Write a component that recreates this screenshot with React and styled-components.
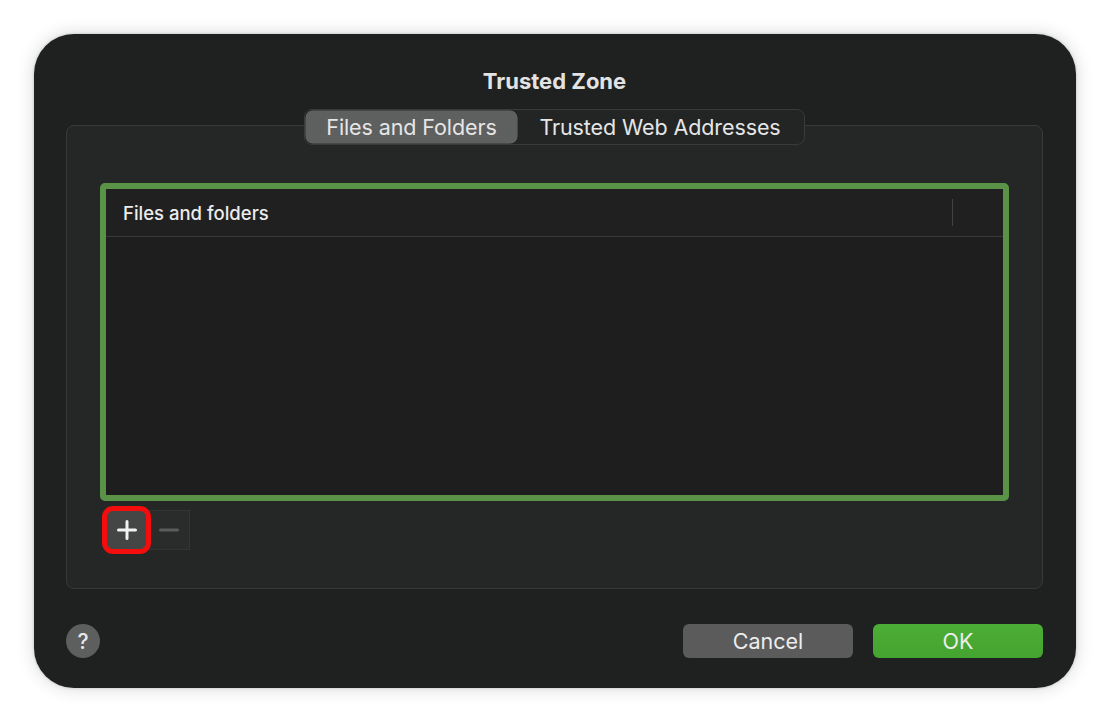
import React from "react";
import styled, { createGlobalStyle } from "styled-components";

const Global = createGlobalStyle`
  html, body { margin: 0; padding: 0; background: #ffffff; }
  body { font-family: "Inter", "Liberation Sans", sans-serif; -webkit-font-smoothing: antialiased; }
  * { box-sizing: border-box; }
`;

const Page = styled.div`
  width: 1110px;
  height: 722px;
  padding: 34px;
  background: #ffffff;
`;

const Window = styled.div`
  width: 1042px;
  height: 654px;
  border-radius: 40px;
  background: #1e2120;
  box-shadow: 0 0 18px rgba(0, 0, 0, 0.16), 0 0 3px rgba(0, 0, 0, 0.2);
  display: flex;
  flex-direction: column;
  padding: 0 33px 30px 32px;
`;

const Title = styled.div`
  margin-top: 33px;
  height: 28px;
  line-height: 28px;
  text-align: center;
  font-size: 22px;
  font-weight: 700;
  color: #e3e3e3;
`;

const Section = styled.div`
  margin-top: 14px;
  display: flex;
  flex-direction: column;
  align-items: center;
`;

const Segmented = styled.div`
  position: relative;
  z-index: 1;
  width: 501px;
  height: 36px;
  margin-bottom: -20px;
  padding: 1px;
  display: flex;
  border-radius: 8px;
  border: 1px solid #393b3b;
  background: #232525;
`;

const Segment = styled.div`
  flex: ${(p) => (p.$w ? `0 0 ${p.$w}px` : "1")};
  display: flex;
  align-items: center;
  justify-content: center;
  border-radius: 7px;
  font-size: 21.5px;
  color: #e6e6e6;
  background: ${(p) => (p.$active ? "#5e5f5f" : "transparent")};
  box-shadow: ${(p) => (p.$active ? "0 0 0 0.5px #6a6b6b" : "none")};
  letter-spacing: -0.1px;
`;

const GroupBox = styled.div`
  width: 977px;
  height: 464px;
  border: 1px solid #383a3a;
  border-radius: 8px;
  background: #242726;
  padding: 57px 33px 0 33px;
  display: flex;
  flex-direction: column;
`;

const Table = styled.div`
  height: 318px;
  border: 6px solid #5a9347;
  border-radius: 5px;
  background: #1e1e1e;
  display: flex;
  flex-direction: column;
`;

const Header = styled.div`
  height: 48px;
  flex: 0 0 48px;
  background: #202020;
  border-bottom: 1px solid #3a3a3a;
  display: flex;
  align-items: center;
  padding-left: 17px;
  padding-right: 50px;
`;

const HeaderLabel = styled.div`
  flex: 1;
  font-size: 18.5px;
  font-weight: 500;
  color: #ececec;
`;

const HeaderDivider = styled.div`
  width: 1px;
  height: 27px;
  background: #424242;
`;

const TableBody = styled.div`
  flex: 1;
`;

const ButtonRow = styled.div`
  margin-top: 9px;
  margin-left: 6px;
  display: flex;
`;

const SmallButton = styled.div`
  position: relative;
  z-index: ${(p) => (p.$enabled ? 2 : 1)};
  width: ${(p) => p.$w}px;
  height: 40px;
  display: flex;
  align-items: center;
  justify-content: center;
  background: ${(p) => (p.$enabled ? "#444646" : "#2a2c2c")};
  border: 1px solid ${(p) => (p.$enabled ? "#4a4c4c" : "#333535")};
`;

const Highlight = styled.div`
  position: absolute;
  top: -5px;
  bottom: -5px;
  left: -5px;
  right: -5px;
  border: 5px solid #f30d0d;
  border-radius: 11px;
  pointer-events: none;
`;

const Footer = styled.div`
  margin-top: 35px;
  display: flex;
  align-items: center;
`;

const HelpButton = styled.div`
  width: 34px;
  height: 34px;
  border-radius: 50%;
  background: #5d5e5e;
  color: #e8e8e8;
  font-size: 21px;
  font-weight: 500;
  display: flex;
  align-items: center;
  justify-content: center;
`;

const Spacer = styled.div`
  flex: 1;
`;

const DialogButton = styled.div`
  width: 170px;
  height: 34px;
  margin-left: ${(p) => (p.$gap ? "20px" : "0")};
  border-radius: 6px;
  display: flex;
  align-items: center;
  justify-content: center;
  font-size: 21.5px;
  color: #ededed;
  background: ${(p) => (p.$primary ? "linear-gradient(#4cae36, #45a32f)" : "#5a5b5a")};
`;

export default function App() {
  return (
    <>
      <Global />
      <Page>
        <Window>
          <Title>Trusted Zone</Title>
          <Section>
            <Segmented>
              <Segment $active $w={211}>Files and Folders</Segment>
              <Segment>Trusted Web Addresses</Segment>
            </Segmented>
            <GroupBox>
              <Table>
                <Header>
                  <HeaderLabel>Files and folders</HeaderLabel>
                  <HeaderDivider />
                </Header>
                <TableBody />
              </Table>
              <ButtonRow>
                <SmallButton $w={41} $enabled>
                  <svg width="20" height="20" viewBox="0 0 20 20">
                    <path d="M10 1.5v17M1.5 10h17" stroke="#f2f2f2" strokeWidth="3" strokeLinecap="round" />
                  </svg>
                  <Highlight />
                </SmallButton>
                <SmallButton $w={43}>
                  <svg width="20" height="20" viewBox="0 0 20 20">
                    <path d="M1.5 10h17" stroke="#5b5d5d" strokeWidth="3" strokeLinecap="round" />
                  </svg>
                </SmallButton>
              </ButtonRow>
            </GroupBox>
          </Section>
          <Footer>
            <HelpButton>?</HelpButton>
            <Spacer />
            <DialogButton>Cancel</DialogButton>
            <DialogButton $primary $gap>OK</DialogButton>
          </Footer>
        </Window>
      </Page>
    </>
  );
}
